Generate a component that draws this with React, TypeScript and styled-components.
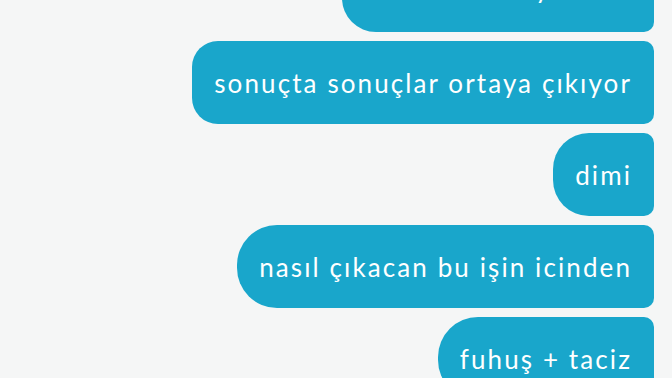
import { createGlobalStyle, styled } from "styled-components";

const GlobalStyle = createGlobalStyle`
  html, body {
    margin: 0;
    padding: 0;
    background: #f5f6f6;
  }
  body {
    font-family: "Lato", "Open Sans", sans-serif;
    overflow: hidden;
  }
`;

const Thread = styled.div`
  width: 672px;
  height: 378px;
  overflow: hidden;
  display: flex;
  flex-direction: column;
  align-items: flex-end;
  gap: 9px;
  padding-right: 18px;
  box-sizing: border-box;
`;

const Bubble = styled.div<{ $radius: number; $top?: number; $lift?: number }>`
  box-sizing: border-box;
  height: 83px;
  flex-shrink: 0;
  display: flex;
  align-items: center;
  padding: 0 22px ${(p) => p.$lift ?? 0}px 22px;
  margin-top: ${(p) => p.$top ?? 0}px;
  background: #19a6cb;
  color: #ffffff;
  font-size: 26px;
  letter-spacing: 2.1px;
  white-space: nowrap;
  border-radius: ${(p) => `${p.$radius}px 10px 10px ${p.$radius}px`};
`;

const messages = [
  { text: "hadi hadi 4 ay sonra", radius: 34, top: -51, lift: 6 },
  { text: "sonuçta sonuçlar ortaya çıkıyor", radius: 26 },
  { text: "dimi", radius: 36 },
  { text: "nasıl çıkacan bu işin icinden", radius: 40 },
  { text: "fuhuş + taciz", radius: 40 },
];

export default function App() {
  return (
    <>
      <GlobalStyle />
      <Thread>
        {messages.map((m) => (
          <Bubble key={m.text} $radius={m.radius} $top={m.top} $lift={m.lift}>
            {m.text}
          </Bubble>
        ))}
      </Thread>
    </>
  );
}
